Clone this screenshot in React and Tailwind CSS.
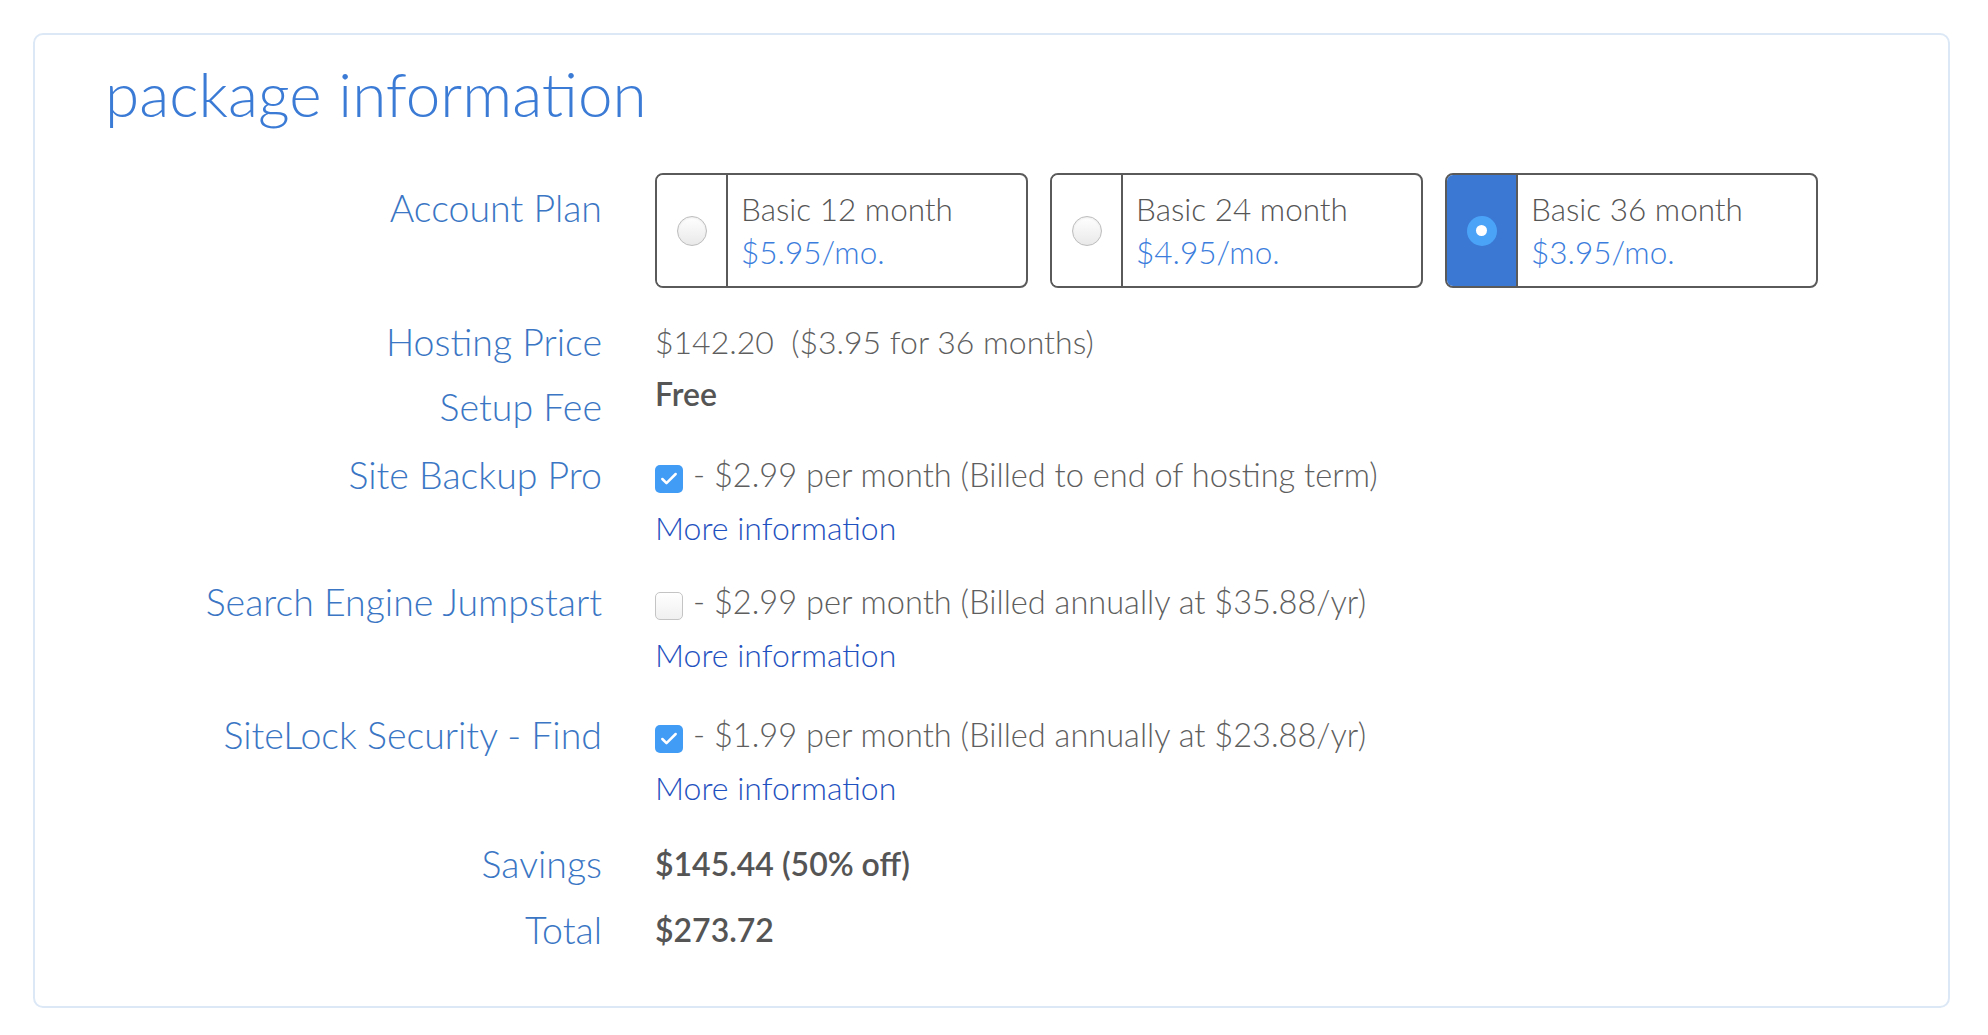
import { Check } from 'lucide-react';

const plans = [
  { id: 12, name: 'Basic 12 month', price: '$5.95/mo.' },
  { id: 24, name: 'Basic 24 month', price: '$4.95/mo.' },
  { id: 36, name: 'Basic 36 month', price: '$3.95/mo.' },
];

function Radio({ selected }) {
  if (selected) {
    return (
      <div className="w-[30px] h-[30px] rounded-full bg-[#4ba3f8] flex items-center justify-center">
        <div className="w-[11px] h-[11px] rounded-full bg-white" />
      </div>
    );
  }
  return (
    <div className="w-[30px] h-[30px] rounded-full border border-[#bdbdbd] bg-gradient-to-b from-white to-[#e9e9e9] shadow-[inset_0_1px_2px_rgba(0,0,0,0.08)]" />
  );
}

function PlanBox({ plan, selected }) {
  return (
    <div className="w-[373px] h-[115px] border-2 border-[#5a5a5a] rounded-[8px] flex overflow-hidden">
      <div className={`w-[71px] shrink-0 border-r-2 border-[#5a5a5a] flex items-center justify-center ${selected ? 'bg-[#3a78d3]' : 'bg-white'}`}>
        <Radio selected={selected} />
      </div>
      <div className="pl-[13px] pt-[13px] text-[31.5px] leading-[43px] font-light">
        <div className="text-[#555]">{plan.name}</div>
        <div className="text-[#3b7ddd]">{plan.price}</div>
      </div>
    </div>
  );
}

function Checkbox({ checked }) {
  if (checked) {
    return (
      <div className="w-[28px] h-[28px] rounded-[5px] bg-[#419cf6] flex items-center justify-center shrink-0">
        <Check className="w-[20px] h-[20px] text-white" strokeWidth={3} />
      </div>
    );
  }
  return (
    <div className="w-[28px] h-[28px] rounded-[5px] border border-[#c4c4c4] bg-gradient-to-b from-white to-[#f0f0f0] shrink-0" />
  );
}

function Row({ label, className = '', children }) {
  return (
    <div className={`flex ${className}`}>
      <div className="w-[567px] shrink-0 text-right text-[37.5px] leading-[40px] font-light text-[#3a76c4]">
        {label}
      </div>
      <div className="pl-[53px] text-[32px] leading-[40px] font-light text-[#5e5e5e]">{children}</div>
    </div>
  );
}

function AddonRow({ label, checked, text, className }) {
  return (
    <Row label={label} className={className}>
      <div className="flex items-center h-[40px] gap-[10px]">
        <div className="pt-[8px]">
          <Checkbox checked={checked} />
        </div>
        <span className="whitespace-pre text-[32.6px]">{text}</span>
      </div>
      <div className="mt-[13px] text-[#1f52c0]">More information</div>
    </Row>
  );
}

export default function App() {
  return (
    <div className="min-h-screen bg-white pt-[33px] px-[33px]" style={{ fontFamily: 'Lato, "Open Sans", sans-serif' }}>
      <div className="w-[1917px] h-[975px] border-2 border-[#dce8f6] rounded-[10px]">
        <h1 className="pl-[70px] mt-[22px] text-[62px] leading-[72px] font-light text-[#3b7bd6]">
          package information
        </h1>

        <div className="flex mt-[44px]">
          <div className="w-[567px] shrink-0 text-right text-[37.5px] leading-[40px] font-light text-[#3a76c4] pt-[15px]">
            Account Plan
          </div>
          <div className="pl-[53px] flex gap-[22px]">
            {plans.map((p) => (
              <PlanBox key={p.id} plan={p} selected={p.id === 36} />
            ))}
          </div>
        </div>

        <Row label="Hosting Price" className="mt-[34px]">
          <span className="whitespace-pre">$142.20  ($3.95 for 36 months)</span>
        </Row>

        <Row label="Setup Fee" className="mt-[25px]">
          <div className="font-semibold text-[#555] leading-[14px]">Free</div>
        </Row>

        <AddonRow
          label="Site Backup Pro"
          checked
          text="- $2.99 per month (Billed to end of hosting term)"
          className="mt-[28px]"
        />
        <AddonRow
          label="Search Engine Jumpstart"
          checked={false}
          text="- $2.99 per month (Billed annually at $35.88/yr)"
          className="mt-[34px]"
        />
        <AddonRow
          label="SiteLock Security - Find"
          checked
          text="- $1.99 per month (Billed annually at $23.88/yr)"
          className="mt-[40px]"
        />

        <Row label="Savings" className="mt-[36px]">
          <span className="font-semibold text-[#555]">$145.44 (50% off)</span>
        </Row>
        <Row label="Total" className="mt-[26px]">
          <span className="font-semibold text-[#555]">$273.72</span>
        </Row>
      </div>
    </div>
  );
}
